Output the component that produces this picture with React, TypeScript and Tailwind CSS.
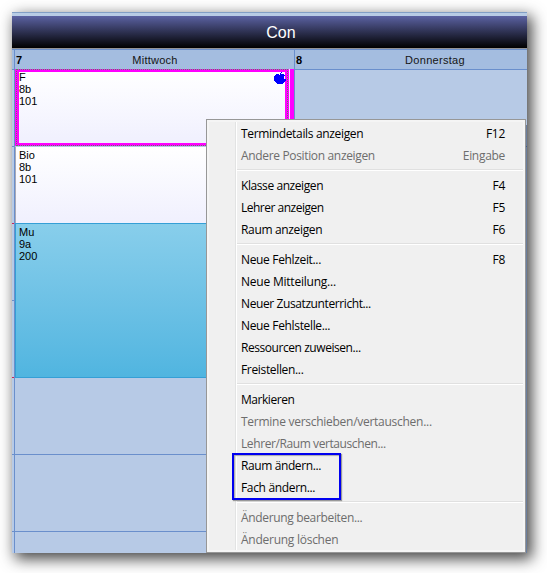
type Item = { label: string; keys?: string; disabled?: boolean; track?: string };

const groups: Item[][] = [
  [
    { label: 'Termindetails anzeigen', keys: 'F12' },
    { label: 'Andere Position anzeigen', keys: 'Eingabe', disabled: true },
  ],
  [
    { label: 'Klasse anzeigen', keys: 'F4', track: 'tracking-[-0.42px]' },
    { label: 'Lehrer anzeigen', keys: 'F5', track: 'tracking-[-0.5px]' },
    { label: 'Raum anzeigen', keys: 'F6' },
  ],
  [
    { label: 'Neue Fehlzeit...', keys: 'F8' },
    { label: 'Neue Mitteilung...', track: 'tracking-[-0.22px]' },
    { label: 'Neuer Zusatzunterricht...', track: 'tracking-[-0.4px]' },
    { label: 'Neue Fehlstelle...' },
    { label: 'Ressourcen zuweisen...', track: 'tracking-[-0.44px]' },
    { label: 'Freistellen...' },
  ],
  [
    { label: 'Markieren', track: 'tracking-[-0.45px]' },
    { label: 'Termine verschieben/vertauschen...', disabled: true, track: 'tracking-[-0.27px]' },
    { label: 'Lehrer/Raum vertauschen...', disabled: true, track: 'tracking-[-0.41px]' },
    { label: 'Raum ändern...', track: 'tracking-[-0.4px]' },
    { label: 'Fach ändern...' },
  ],
  [
    { label: 'Änderung bearbeiten...', disabled: true },
    { label: 'Änderung löschen', disabled: true, track: 'tracking-[-0.26px]' },
  ],
];

function ContextMenu() {
  return (
    <div className="absolute left-[194px] top-[107px] h-[434px] w-[320px] border border-[#979797] bg-[#f5f5f5] p-[2px] font-['Open_Sans',sans-serif] text-[12px]">
      <div className="flex h-full bg-[#f0f0f0]">
        <div className="w-[27px] shrink-0 border-r border-[#e2e3e3]" />
        <div className="flex-1 border-l border-white">
          {groups.map((group, g) => (
            <div key={g}>
              {g > 0 && (
                <div className="flex h-2 flex-col justify-center">
                  <div className="h-px bg-[#e0e0e0]" />
                  <div className="h-px bg-white" />
                </div>
              )}
              {group.map((item) => (
                <div
                  key={item.label}
                  className={`flex h-[22px] items-start justify-between pl-1 pr-[18px] pt-px leading-[22px] whitespace-nowrap ${item.disabled ? 'text-[#6d6d6d]' : 'text-black'}`}
                >
                  <span className={item.track ?? 'tracking-[-0.34px]'}>{item.label}</span>
                  <span className="tracking-[-0.3px]">{item.keys}</span>
                </div>
              ))}
            </div>
          ))}
        </div>
      </div>
      <div className="absolute left-[25px] top-[333px] h-[47px] w-[109px] border-2 border-[#0000f0] shadow-[1px_1px_1px_#999,inset_1px_1px_1px_#aaa]" />
    </div>
  );
}

function Lesson({ lines }: { lines: string[] }) {
  return (
    <div className="pl-[4px] pt-[2px] text-[11px] leading-[12px] text-black">
      {lines.map((line) => (
        <div key={line}>{line}</div>
      ))}
    </div>
  );
}

function Apple() {
  return (
    <svg className="absolute right-[3px] top-[3px]" width="12" height="12" viewBox="0 0 12 12" shapeRendering="crispEdges" fill="#0000ff">
      <path d="M7 0h1v1H7v1h3v1h1v1h-1v3h2v2h-1v1h-1v1H9v1H3v-1H2v-1H1V9H0V4h1V3h1V2h3v1h1V1h1z" />
    </svg>
  );
}

export default function App() {
  return (
    <div className="h-[573px] w-[547px] overflow-hidden bg-white p-3 font-['Liberation_Sans',Arial,sans-serif]">
      <div className="relative flex h-[541px] w-[515px] flex-col bg-[#b7cae6] shadow-[4px_5px_14px_1px_rgba(0,0,0,0.72)]">
        <div className="h-1 border-t border-[#829fc5] bg-[#b8cce5]" />
        <div className="h-8 bg-linear-to-b/srgb from-[#5b62a2] to-black pl-[23px] text-center text-[16px] leading-[33px] text-white">Con</div>
        <div className="h-px bg-[#949496]" />
        <div className="flex h-[21px] border-y border-[#6a8fcc] bg-[#a4bde0] text-[11px] leading-[20px] text-[#151515]">
          <div className="w-[3px] border-r border-[#6a8fcc]" />
          <div className="flex w-[280px] border-r border-[#6a8fcc] pl-px">
            <b className="w-[12px] text-black">7</b>
            <span className="flex-1 pr-[12px] text-center tracking-[0.25px]">Mittwoch</span>
          </div>
          <div className="flex flex-1 pl-[1px]">
            <b className="w-[12px] text-black">8</b>
            <span className="flex-1 pl-[35px] text-center tracking-[0.3px]">Donnerstag</span>
          </div>
        </div>
        <div className="flex min-h-0 flex-1">
          <div className="flex w-[3px] flex-col border-r border-[#6a8fcc]">
            <div className="h-[77px] border-b border-[#6a8fcc]" />
            <div className="h-[77px] border-b border-[#cc2255]" />
            <div className="h-[77px] border-b border-[#6a8fcc]" />
            <div className="h-[77px] border-b border-[#cc2255]" />
            <div className="h-[77px] border-b border-[#6a8fcc]" />
            <div className="h-[77px] border-b border-[#6a8fcc]" />
          </div>
          <div className="flex w-[280px] flex-col border-r border-[#6a8fcc]">
            <div className="-mt-px flex h-[78px]">
              <div className="relative h-[77px] w-[274px] bg-[#ff00ff] p-[3px] pl-[4px] pr-[4px]">
                <div className="h-full bg-linear-to-b from-white to-[#f0f0fe]" />
                <div className="absolute inset-0 left-px right-px border border-dotted border-[#5d875d]" />
                <div className="absolute left-0 top-0">
                  <Lesson lines={['F', '8b', '101']} />
                </div>
                <Apple />
              </div>
              <div className="w-px bg-[#f5e6fb]" />
              <div className="w-[4px] bg-[#ff00ff]" />
            </div>
            <div className="h-[76px] border-l border-[#a9a9b5] bg-linear-to-b from-white to-[#f0f0fe]">
              <div className="-ml-px">
                <Lesson lines={['Bio', '8b', '101']} />
              </div>
            </div>
            <div className="h-[155px] border border-[#359fd6] bg-linear-to-b from-[#88ceeb] to-[#50b5e0]">
              <div className="-ml-px">
                <Lesson lines={['Mu', '9a', '200']} />
              </div>
            </div>
            <div className="h-[77px] border-b border-[#6a8fcc]" />
            <div className="h-[77px] border-b border-[#6a8fcc]" />
          </div>
          <div className="flex flex-1 flex-col">
            <div className="h-[55px]" />
            <div className="h-[22px] border-b border-[#435d8a] bg-linear-to-r from-[#b7cae6] from-[231px] to-[#6b7f9f] to-[231px]" />
            <div className="flex-1 bg-[#6b7f9f]" />
          </div>
        </div>
        <ContextMenu />
      </div>
    </div>
  );
}
